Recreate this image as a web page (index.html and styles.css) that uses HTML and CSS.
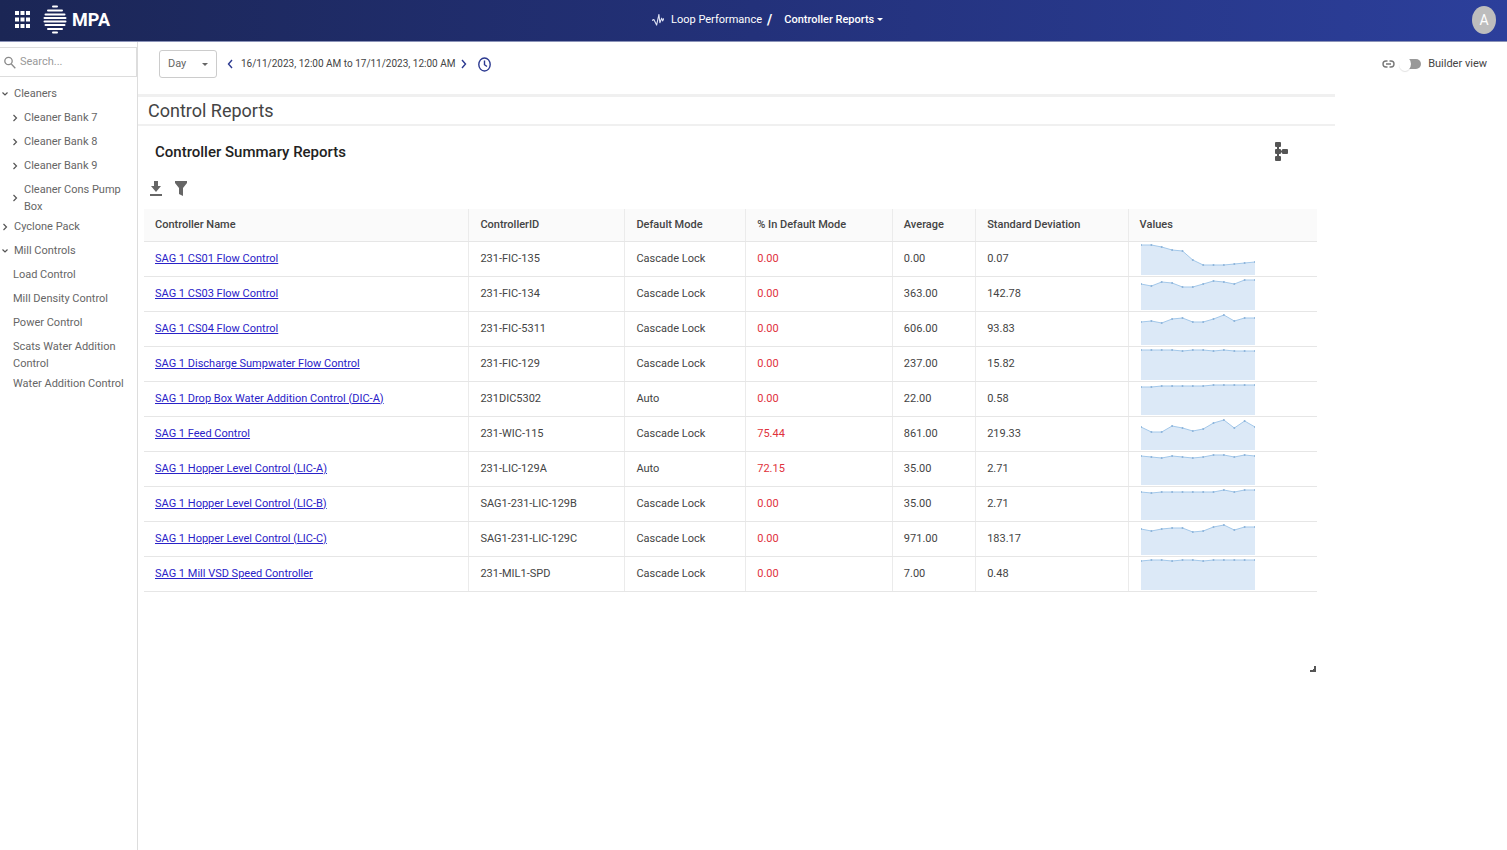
FILE: index.html
```html
<!DOCTYPE html>
<html lang="en">
<head>
  <title>MPA - Controller Reports</title>

  <meta charset="utf-8">
  <meta name="viewport" content="width=device-width, initial-scale=1">
  <link rel="stylesheet" href="styles.css">
</head>
<body>

  <header class="topbar">
    <div class="brand">
      <button type="button" class="icon-button" aria-label="Apps">
        <svg width="15" height="17" viewBox="0 0 15 17" fill="#fff">
          <path d="M0 0h4v4H0zM5.5 0h4v4h-4zM11 0h4v4h-4zM0 6.5h4v4H0zM5.5 6.5h4v4h-4zM11 6.5h4v4h-4zM0 13h4v4H0zM5.5 13h4v4h-4zM11 13h4v4h-4z"/>
        </svg>
      </button>
      <svg class="logo" width="24" height="29" viewBox="0 0 24 29" fill="none" stroke="#fff" stroke-width="2" stroke-linecap="round">
        <path d="M10 1.500h4M5 5.500h14M2.500 9.500h19M1.500 13h21M1.500 16.500h21M2.500 20h19M5 24h14M10 27.500h4"/>
      </svg>
      <span class="brand-name">MPA</span>
    </div>
    <nav class="crumbs">
      <svg width="12" height="14" viewBox="0 0 13 14" fill="none" stroke="#dfe3f5" stroke-width="1.200" stroke-linejoin="round">
        <path d="M0 7.500l2-1 3 6L7.500 1l1 9L10.500 5l1 3 1.500-3"/>
      </svg>
      <a href="#">Loop Performance</a>
      <span class="slash">/</span>
      <button type="button" class="crumb-menu">Controller Reports <i class="caret"></i></button>
    </nav>
    <button type="button" class="avatar" aria-label="Account">A</button>
  </header>

  <div class="page">
    <aside class="sidebar">
      <div class="search">
        <svg width="12" height="13" viewBox="0 0 12 13" fill="none" stroke="#8a8a8a" stroke-width="1.300">
          <circle cx="4.500" cy="5" r="3.700"/>
          <path d="M7.300 8l4 4.300"/>
        </svg>
        <input type="text" placeholder="Search..." aria-label="Search">
      </div>
      <ul class="tree">
        <li><a href="#"><svg class="chevron open" viewBox="0 0 6 8"><path d="M1.500 1.500L4 4 1.500 6.500"/></svg>Cleaners</a>
          <ul>
            <li><a href="#"><svg class="chevron" viewBox="0 0 6 8"><path d="M1.500 1L4.500 4l-3 3"/></svg>Cleaner Bank 7</a></li>
            <li><a href="#"><svg class="chevron" viewBox="0 0 6 8"><path d="M1.500 1L4.500 4l-3 3"/></svg>Cleaner Bank 8</a></li>
            <li><a href="#"><svg class="chevron" viewBox="0 0 6 8"><path d="M1.500 1L4.500 4l-3 3"/></svg>Cleaner Bank 9</a></li>
            <li><a href="#" class="two-line"><svg class="chevron" viewBox="0 0 6 8"><path d="M1.500 1L4.500 4l-3 3"/></svg>Cleaner Cons Pump Box</a></li>
          </ul>
        </li>
        <li><a href="#"><svg class="chevron" viewBox="0 0 6 8"><path d="M1.500 1L4.500 4l-3 3"/></svg>Cyclone Pack</a></li>
        <li><a href="#"><svg class="chevron open" viewBox="0 0 6 8"><path d="M1.500 1.500L4 4 1.500 6.500"/></svg>Mill Controls</a>
          <ul class="leaves">
            <li><a href="#">Load Control</a></li>
            <li><a href="#">Mill Density Control</a></li>
            <li><a href="#">Power Control</a></li>
            <li><a href="#" class="two-line">Scats Water Addition Control</a></li>
            <li><a href="#">Water Addition Control</a></li>
          </ul>
        </li>
      </ul>
    </aside>

    <main class="main">
      <div class="toolbar">
        <div class="range">
          <select aria-label="Period">
            <option>Day</option>
            <option>Week</option>
            <option>Month</option>
          </select>
          <i class="caret"></i>
        </div>
        <button type="button" class="icon-button" aria-label="Previous">
          <svg width="6" height="10" viewBox="0 0 6 10" fill="none" stroke="#2b3990" stroke-width="1.400"><path d="M5 1L1.500 5 5 9"/></svg>
        </button>
        <span class="dates">16/11/2023, 12:00 AM to 17/11/2023, 12:00 AM</span>
        <button type="button" class="icon-button" aria-label="Next">
          <svg width="6" height="10" viewBox="0 0 6 10" fill="none" stroke="#2b3990" stroke-width="1.400"><path d="M1 1l3.500 4L1 9"/></svg>
        </button>
        <button type="button" class="icon-button clock" aria-label="Now">
          <svg width="13" height="15" viewBox="0 0 13 15" fill="none" stroke="#2b3990" stroke-width="1.400"><ellipse cx="6.500" cy="7.500" rx="5.700" ry="6.500"/><path d="M6.500 3.500v4.200L9 9.500"/></svg>
        </button>
        <div class="builder">
          <svg width="13" height="8" viewBox="0 0 13 8" fill="none" stroke="#777" stroke-width="1.400"><path d="M5.500 1H4a3 3 0 0 0 0 6h1.500M7.500 1H9a3 3 0 0 1 0 6H7.500M4 4h5"/></svg>
          <label class="switch"><input type="checkbox"><i class="track"></i>Builder view</label>
        </div>
      </div>

      <div class="report">
        <h1>Control Reports</h1>
        <section class="card">
          <div class="card-head">
            <h2>Controller Summary Reports</h2>
            <button type="button" class="icon-button" aria-label="Hierarchy">
              <svg width="13" height="20" viewBox="0 0 13 20" fill="#555"><rect x="0" y="0" width="6" height="5" rx="1"/><rect x="0" y="7" width="6" height="5" rx="1"/><rect x="0" y="14" width="6" height="5" rx="1"/><rect x="7" y="7" width="6" height="5" rx="1"/><path d="M2 4h2v11H2zM5 8.500h3v2H5z"/></svg>
            </button>
          </div>
          <div class="actions">
            <button type="button" class="icon-button" aria-label="Download">
              <svg width="12" height="15" viewBox="0 0 12 15" fill="#666"><path d="M4 0h4v5h3L6 11 1 5h3zM0 13h12v2H0z"/></svg>
            </button>
            <button type="button" class="icon-button" aria-label="Filter">
              <svg width="12" height="15" viewBox="0 0 12 15" fill="#666"><path d="M0 0h12v2L8 7v8l-4-2V7L0 2z"/></svg>
            </button>
          </div>
          <table>
            <colgroup>
              <col class="c-name"><col class="c-id"><col class="c-mode"><col class="c-pct"><col class="c-avg"><col class="c-dev"><col>
            </colgroup>
            <thead>
              <tr><th>Controller Name</th><th>ControllerID</th><th>Default Mode</th><th>% In Default Mode</th><th>Average</th><th>Standard Deviation</th><th>Values</th></tr>
            </thead>
            <tbody>
              <tr><td><a href="#">SAG 1 CS01 Flow Control</a></td><td>231-FIC-135</td><td>Cascade Lock</td><td class="bad">0.00</td><td>0.00</td><td>0.07</td><td class="spark" data-values="30,30,28,25,24,15,10,10,10,11,12,13"></td></tr>
              <tr><td><a href="#">SAG 1 CS03 Flow Control</a></td><td>231-FIC-134</td><td>Cascade Lock</td><td class="bad">0.00</td><td>363.00</td><td>142.78</td><td class="spark" data-values="26,24,28,27,23,23,26,29,28,26,30,30"></td></tr>
              <tr><td><a href="#">SAG 1 CS04 Flow Control</a></td><td>231-FIC-5311</td><td>Cascade Lock</td><td class="bad">0.00</td><td>606.00</td><td>93.83</td><td class="spark" data-values="23,24,22,26,27,23,23,26,30,24,27,27"></td></tr>
              <tr><td><a href="#">SAG 1 Discharge Sumpwater Flow Control</a></td><td>231-FIC-129</td><td>Cascade Lock</td><td class="bad">0.00</td><td>237.00</td><td>15.82</td><td class="spark" data-values="30,30,30,30,29,30,30,29,30,29,29,29"></td></tr>
              <tr><td><a href="#">SAG 1 Drop Box Water Addition Control (DIC-A)</a></td><td>231DIC5302</td><td>Auto</td><td class="bad">0.00</td><td>22.00</td><td>0.58</td><td class="spark" data-values="28,28,29,29,29,29,29,30,30,30,30,30"></td></tr>
              <tr><td><a href="#">SAG 1 Feed Control</a></td><td>231-WIC-115</td><td>Cascade Lock</td><td class="bad">75.44</td><td>861.00</td><td>219.33</td><td class="spark" data-values="23,18,18,24,22,19,21,27,30,22,29,23"></td></tr>
              <tr><td><a href="#">SAG 1 Hopper Level Control (LIC-A)</a></td><td>231-LIC-129A</td><td>Auto</td><td class="bad">72.15</td><td>35.00</td><td>2.71</td><td class="spark" data-values="29,28,27,29,28,27,28,30,30,28,30,29"></td></tr>
              <tr><td><a href="#">SAG 1 Hopper Level Control (LIC-B)</a></td><td>SAG1-231-LIC-129B</td><td>Cascade Lock</td><td class="bad">0.00</td><td>35.00</td><td>2.71</td><td class="spark" data-values="28,27,28,28,28,28,28,28,30,28,30,30"></td></tr>
              <tr><td><a href="#">SAG 1 Hopper Level Control (LIC-C)</a></td><td>SAG1-231-LIC-129C</td><td>Cascade Lock</td><td class="bad">0.00</td><td>971.00</td><td>183.17</td><td class="spark" data-values="26,24,26,27,27,23,24,28,30,25,28,28"></td></tr>
              <tr><td><a href="#">SAG 1 Mill VSD Speed Controller</a></td><td>231-MIL1-SPD</td><td>Cascade Lock</td><td class="bad">0.00</td><td>7.00</td><td>0.48</td><td class="spark" data-values="29,30,30,29,30,30,29,30,30,30,30,30"></td></tr>
            </tbody>
          </table>
          <svg class="resize" width="6" height="6" viewBox="0 0 6 6" fill="#555"><path d="M6 0v6H0V4h3V3h1V0z"/></svg>
        </section>
      </div>
    </main>
  </div>

<script type="text/javascript">
  (function(){
    var width = 114;
    var height = 32;

    // Draws one area chart in each "Values" cell
    document.querySelectorAll('.spark').forEach(function(cell) {
      var values = cell.dataset.values.split(',').map(Number);
      var step = width / (values.length - 1);
      var points = values.map(function(v, i) {
        return [(i * step).toFixed(1), height - v];
      });
      var line = points.join(' ');
      var dots = points.map(function(p) {
        return '<circle cx="' + p[0] + '" cy="' + p[1] + '" r="1"/>';
      }).join('');

      cell.innerHTML = '<svg width="' + width + '" height="' + height + '">' +
        '<polygon points="0,' + height + ' ' + line + ' ' + width + ',' + height + '"/>' +
        '<polyline points="' + line + '"/>' + dots + '</svg>';
    });
  })();
</script>

</body>
</html>
```
FILE: styles.css
```css
* {
  box-sizing: border-box;
}
body {
  background: #fff;
  color: #444;
  display: flex;
  flex-direction: column;
  font-family: Roboto, Arial, sans-serif;
  font-size: 11px;
  line-height: 16px;
  margin: 0;
  min-height: 100vh;
}
button {
  background: none;
  border: 0;
  color: inherit;
  cursor: pointer;
  font: inherit;
  padding: 0;
}
svg {
  display: block;
  flex: none;
}
ul {
  list-style: none;
  margin: 0;
  padding: 0;
}
.caret {
  border: 3px solid transparent;
  border-bottom: 0;
  border-top-color: currentColor;
  display: inline-block;
}

/* top bar */
.topbar {
  align-items: center;
  background: linear-gradient(90deg, #1b2655, #23317a 50%, #2c3f9b);
  border-bottom: 1px solid #8b93b8;
  color: #fff;
  display: grid;
  grid-template-columns: 1fr auto 1fr;
  height: 42px;
  padding: 0 11px 2px 15px;
}
.brand {
  align-items: center;
  display: flex;
}
.logo {
  margin: 0 5px 0 13px;
}
.brand-name {
  font-size: 18px;
  font-weight: 700;
}
.crumbs {
  align-items: center;
  display: flex;
  margin-left: 24px;
}
.crumbs a {
  color: #fff;
  margin-left: 7px;
  text-decoration: none;
}
.slash {
  font-size: 14px;
  font-weight: 700;
  margin: 0 12px 0 5px;
}
.crumb-menu {
  font-weight: 500;
}
.crumb-menu .caret {
  vertical-align: middle;
}
.avatar {
  background: #bdbdbd;
  border-radius: 50%;
  font-size: 14px;
  height: 28px;
  justify-self: end;
  width: 24px;
}

/* sidebar */
.page {
  display: flex;
  flex: 1;
}
.sidebar {
  border-right: 1px solid #ddd;
  color: #666;
  flex: none;
  padding-top: 5px;
  width: 138px;
}
.search {
  align-items: center;
  border: 1px solid #ddd;
  border-left: 0;
  display: flex;
  height: 30px;
  padding-left: 4px;
}
.search input {
  border: 0;
  color: #666;
  font: inherit;
  margin-left: 4px;
  outline: 0;
  padding: 0;
  width: 100%;
}
.search input::placeholder {
  color: #999;
}
.tree {
  padding-top: 5px;
}
.tree a {
  align-items: center;
  color: inherit;
  display: flex;
  min-height: 24px;
  padding: 4px 8px 4px 2px;
  text-decoration: none;
}
.tree ul a {
  padding-left: 12px;
}
.tree .leaves a {
  padding-left: 13px;
}
.tree .two-line {
  line-height: 17px;
  padding-bottom: 0;
  padding-top: 3px;
}
.chevron {
  fill: none;
  height: 8px;
  margin-right: 6px;
  stroke: #555;
  stroke-width: 1.2;
  width: 6px;
}
.chevron.open {
  transform: rotate(90deg);
}

/* toolbar */
.main {
  flex: 1;
  min-width: 0;
}
.toolbar {
  align-items: center;
  display: flex;
  height: 52px;
  padding: 0 20px 8px 21px;
}
.range {
  color: #666;
  margin-right: 10px;
  position: relative;
}
.range select {
  appearance: none;
  background: #fff;
  border: 1px solid #ccc;
  border-radius: 3px;
  color: inherit;
  font: inherit;
  height: 28px;
  padding: 0 8px;
  width: 58px;
}
.range .caret {
  pointer-events: none;
  position: absolute;
  right: 9px;
  top: 13px;
}
.dates {
  font-size: 10px;
  margin: 0 6px 0 8px;
}
.clock {
  margin-left: 11px;
}
.builder {
  align-items: center;
  display: flex;
  gap: 4px;
  margin-left: auto;
}
.switch {
  align-items: center;
  display: flex;
}
.switch input {
  appearance: none;
  background: #fff;
  border-radius: 50%;
  box-shadow: 0 1px 1px rgba(0, 0, 0, .12);
  height: 14px;
  margin: 0 -5px 0 0;
  width: 12px;
  z-index: 1;
}
.track {
  background: #999;
  border-radius: 0 5px 5px 0;
  height: 10px;
  margin-right: 7px;
  width: 15px;
}

/* report */
.report {
  margin-right: 172px;
}
h1 {
  border: solid #f0f0f0;
  border-width: 3px 0 2px;
  font-size: 18px;
  font-weight: 400;
  line-height: 27px;
  margin: 0;
  padding-left: 10px;
}
.card {
  padding: 16px 18px 0 6px;
}
.card-head {
  align-items: center;
  display: flex;
  height: 20px;
  justify-content: space-between;
  padding: 0 29px 0 11px;
}
h2 {
  color: #222;
  font-size: 15px;
  font-weight: 500;
  line-height: 20px;
  margin: 0;
}
.actions {
  display: flex;
  gap: 13px;
  margin: 19px 0 13px 6px;
}
table {
  border-collapse: collapse;
  table-layout: fixed;
  width: 100%;
}
.c-name {
  width: 27.7%;
}
.c-id {
  width: 13.3%;
}
.c-mode {
  width: 10.3%;
}
.c-pct {
  width: 12.5%;
}
.c-avg {
  width: 7.1%;
}
.c-dev {
  width: 13%;
}
th, td {
  border-bottom: 1px solid #e6e6e6;
  border-right: 1px solid #ebebeb;
  height: 35px;
  padding: 0 11px;
  text-align: left;
  white-space: nowrap;
}
th:last-child, td:last-child {
  border-right: 0;
}
th {
  background: #fafafa;
  font-weight: 500;
  height: 32px;
}
td a {
  color: #2a22c8;
}
.bad {
  color: #e0323c;
}
td.spark {
  padding: 0 12px;
}
.spark polygon {
  fill: #dce9f7;
}
.spark polyline {
  fill: none;
  stroke: #a3c8ea;
}
.spark circle {
  fill: #8db4da;
}
.resize {
  margin: 74px 1px 0 auto;
}
```
